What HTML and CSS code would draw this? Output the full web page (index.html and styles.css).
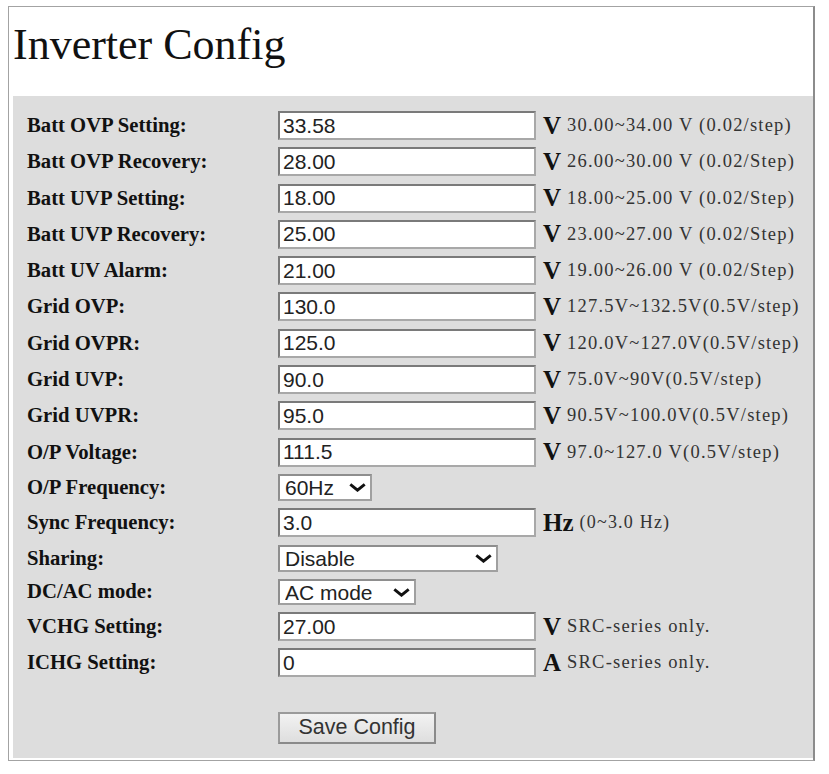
FILE: index.html
```html
<!DOCTYPE html>
<html>
<head>
<meta charset="utf-8">
<title>Inverter Config</title>
<link rel="stylesheet" href="styles.css">
</head>
<body>
<div class="frame">
  <h1 class="title">Inverter Config</h1>
  <form class="panel">
    <div class="row"><span class="label">Batt OVP Setting:</span><input class="field" type="text" value="33.58"><span class="unit">V</span><span class="range">30.00~34.00 V (0.02/step)</span></div>
    <div class="row"><span class="label">Batt OVP Recovery:</span><input class="field" type="text" value="28.00"><span class="unit">V</span><span class="range">26.00~30.00 V (0.02/Step)</span></div>
    <div class="row"><span class="label">Batt UVP Setting:</span><input class="field" type="text" value="18.00"><span class="unit">V</span><span class="range">18.00~25.00 V (0.02/Step)</span></div>
    <div class="row"><span class="label">Batt UVP Recovery:</span><input class="field" type="text" value="25.00"><span class="unit">V</span><span class="range">23.00~27.00 V (0.02/Step)</span></div>
    <div class="row"><span class="label">Batt UV Alarm:</span><input class="field" type="text" value="21.00"><span class="unit">V</span><span class="range">19.00~26.00 V (0.02/Step)</span></div>
    <div class="row"><span class="label">Grid OVP:</span><input class="field" type="text" value="130.0"><span class="unit">V</span><span class="range">127.5V~132.5V(0.5V/step)</span></div>
    <div class="row"><span class="label">Grid OVPR:</span><input class="field" type="text" value="125.0"><span class="unit">V</span><span class="range">120.0V~127.0V(0.5V/step)</span></div>
    <div class="row"><span class="label">Grid UVP:</span><input class="field" type="text" value="90.0"><span class="unit">V</span><span class="range">75.0V~90V(0.5V/step)</span></div>
    <div class="row"><span class="label">Grid UVPR:</span><input class="field" type="text" value="95.0"><span class="unit">V</span><span class="range">90.5V~100.0V(0.5V/step)</span></div>
    <div class="row"><span class="label">O/P Voltage:</span><input class="field" type="text" value="111.5"><span class="unit">V</span><span class="range">97.0~127.0 V(0.5V/step)</span></div>
    <div class="row"><span class="label">O/P Frequency:</span>
      <span class="sel sel-freq"><select><option>60Hz</option><option>50Hz</option></select><svg class="chev" viewBox="0 0 20 10"><path d="M2 1.5 L10 8 L18 1.5" fill="none" stroke="#111" stroke-width="3.2"/></svg></span>
    </div>
    <div class="row"><span class="label">Sync Frequency:</span><input class="field" type="text" value="3.0"><span class="unit">Hz</span><span class="range small">(0~3.0 Hz)</span></div>
    <div class="row"><span class="label">Sharing:</span>
      <span class="sel sel-share"><select><option>Disable</option><option>Enable</option></select><svg class="chev" viewBox="0 0 20 10"><path d="M2 1.5 L10 8 L18 1.5" fill="none" stroke="#111" stroke-width="3.2"/></svg></span>
    </div>
    <div class="row"><span class="label">DC/AC mode:</span>
      <span class="sel sel-mode"><select><option>AC mode</option><option>DC mode</option></select><svg class="chev" viewBox="0 0 20 10"><path d="M2 1.5 L10 8 L18 1.5" fill="none" stroke="#111" stroke-width="3.2"/></svg></span>
    </div>
    <div class="row"><span class="label">VCHG Setting:</span><input class="field" type="text" value="27.00"><span class="unit">V</span><span class="range">SRC-series only.</span></div>
    <div class="row"><span class="label">ICHG Setting:</span><input class="field" type="text" value="0"><span class="unit">A</span><span class="range">SRC-series only.</span></div>
    <div class="row row-btn"><span class="label"></span><button class="save" type="button">Save Config</button></div>
  </form>
</div>
</body>
</html>
```

FILE: styles.css
```css
html, body {
  margin: 0;
  padding: 0;
  background: #ffffff;
}

.frame {
  box-sizing: border-box;
  margin: 6px 0 0 8px;
  width: 807px;
  height: 755px;
  border: 1px solid #a3a3a3;
  border-right: 2px solid #8c8c8c;
  padding: 0 0 2px 4px;
  display: flex;
  flex-direction: column;
}

.title {
  margin: 0;
  height: 89px;
  box-sizing: border-box;
  padding: 16px 0 0 0;
  font-family: "Liberation Serif", "Times New Roman", serif;
  font-weight: normal;
  font-size: 44px;
  line-height: 44px;
  color: #111;
}

.panel {
  flex: 1;
  background: #dddddd;
  margin: 0;
  padding: 15px 0 0 14px;
  display: flex;
  flex-direction: column;
  gap: 7.3px;
}

.row {
  display: flex;
  align-items: center;
}

.label {
  width: 251px;
  flex: none;
  font-family: "Liberation Serif", "Times New Roman", serif;
  font-weight: bold;
  font-size: 20.7px;
  color: #111;
}

.field {
  box-sizing: border-box;
  width: 258px;
  height: 29px;
  margin: 0;
  padding: 0 3px;
  border: 2px solid #8e8e8e;
  border-top-color: #7a7a7a;
  border-left-color: #7a7a7a;
  border-bottom-color: #a8a8a8;
  border-right-color: #a8a8a8;
  background: #fff;
  font-family: "Liberation Sans", Arial, sans-serif;
  font-size: 21px;
  color: #222;
  outline: none;
}

.unit {
  margin-left: 7px;
  font-family: "Liberation Serif", "Times New Roman", serif;
  font-weight: bold;
  font-size: 25px;
  color: #111;
}

.range {
  margin-left: 6px;
  font-family: "Liberation Serif", "Times New Roman", serif;
  font-size: 18.5px;
  letter-spacing: 1.2px;
  color: #333;
}

.range.small {
  font-size: 18px;
  letter-spacing: 1.2px;
}

.sel {
  position: relative;
  display: inline-block;
  height: 27px;
}

.sel select {
  box-sizing: border-box;
  height: 27px;
  margin: 0;
  padding: 0 0 0 5px;
  -webkit-appearance: none;
  appearance: none;
  border: 2px solid #8e8e8e;
  border-bottom-color: #a0a0a0;
  border-right-color: #a0a0a0;
  border-radius: 0;
  background: #fff;
  font-family: "Liberation Sans", Arial, sans-serif;
  font-size: 21px;
  color: #222;
  outline: none;
}

.sel-freq select { width: 94px; }
.sel-share select { width: 220px; }
.sel-mode select { width: 138px; height: 26px; }
.sel-mode { height: 26px; }

.chev {
  position: absolute;
  right: 5px;
  top: 9px;
  width: 19px;
  height: 9px;
  pointer-events: none;
}

.row-btn {
  margin-top: 27px;
}

.save {
  box-sizing: border-box;
  width: 158px;
  height: 32px;
  margin: 0;
  padding: 0;
  border: 2px solid #8a8a8a;
  border-top-color: #9a9a9a;
  border-left-color: #9a9a9a;
  background: linear-gradient(#f2f2f2, #dedede);
  font-family: "Liberation Sans", Arial, sans-serif;
  font-size: 21.5px;
  color: #333;
}
```
